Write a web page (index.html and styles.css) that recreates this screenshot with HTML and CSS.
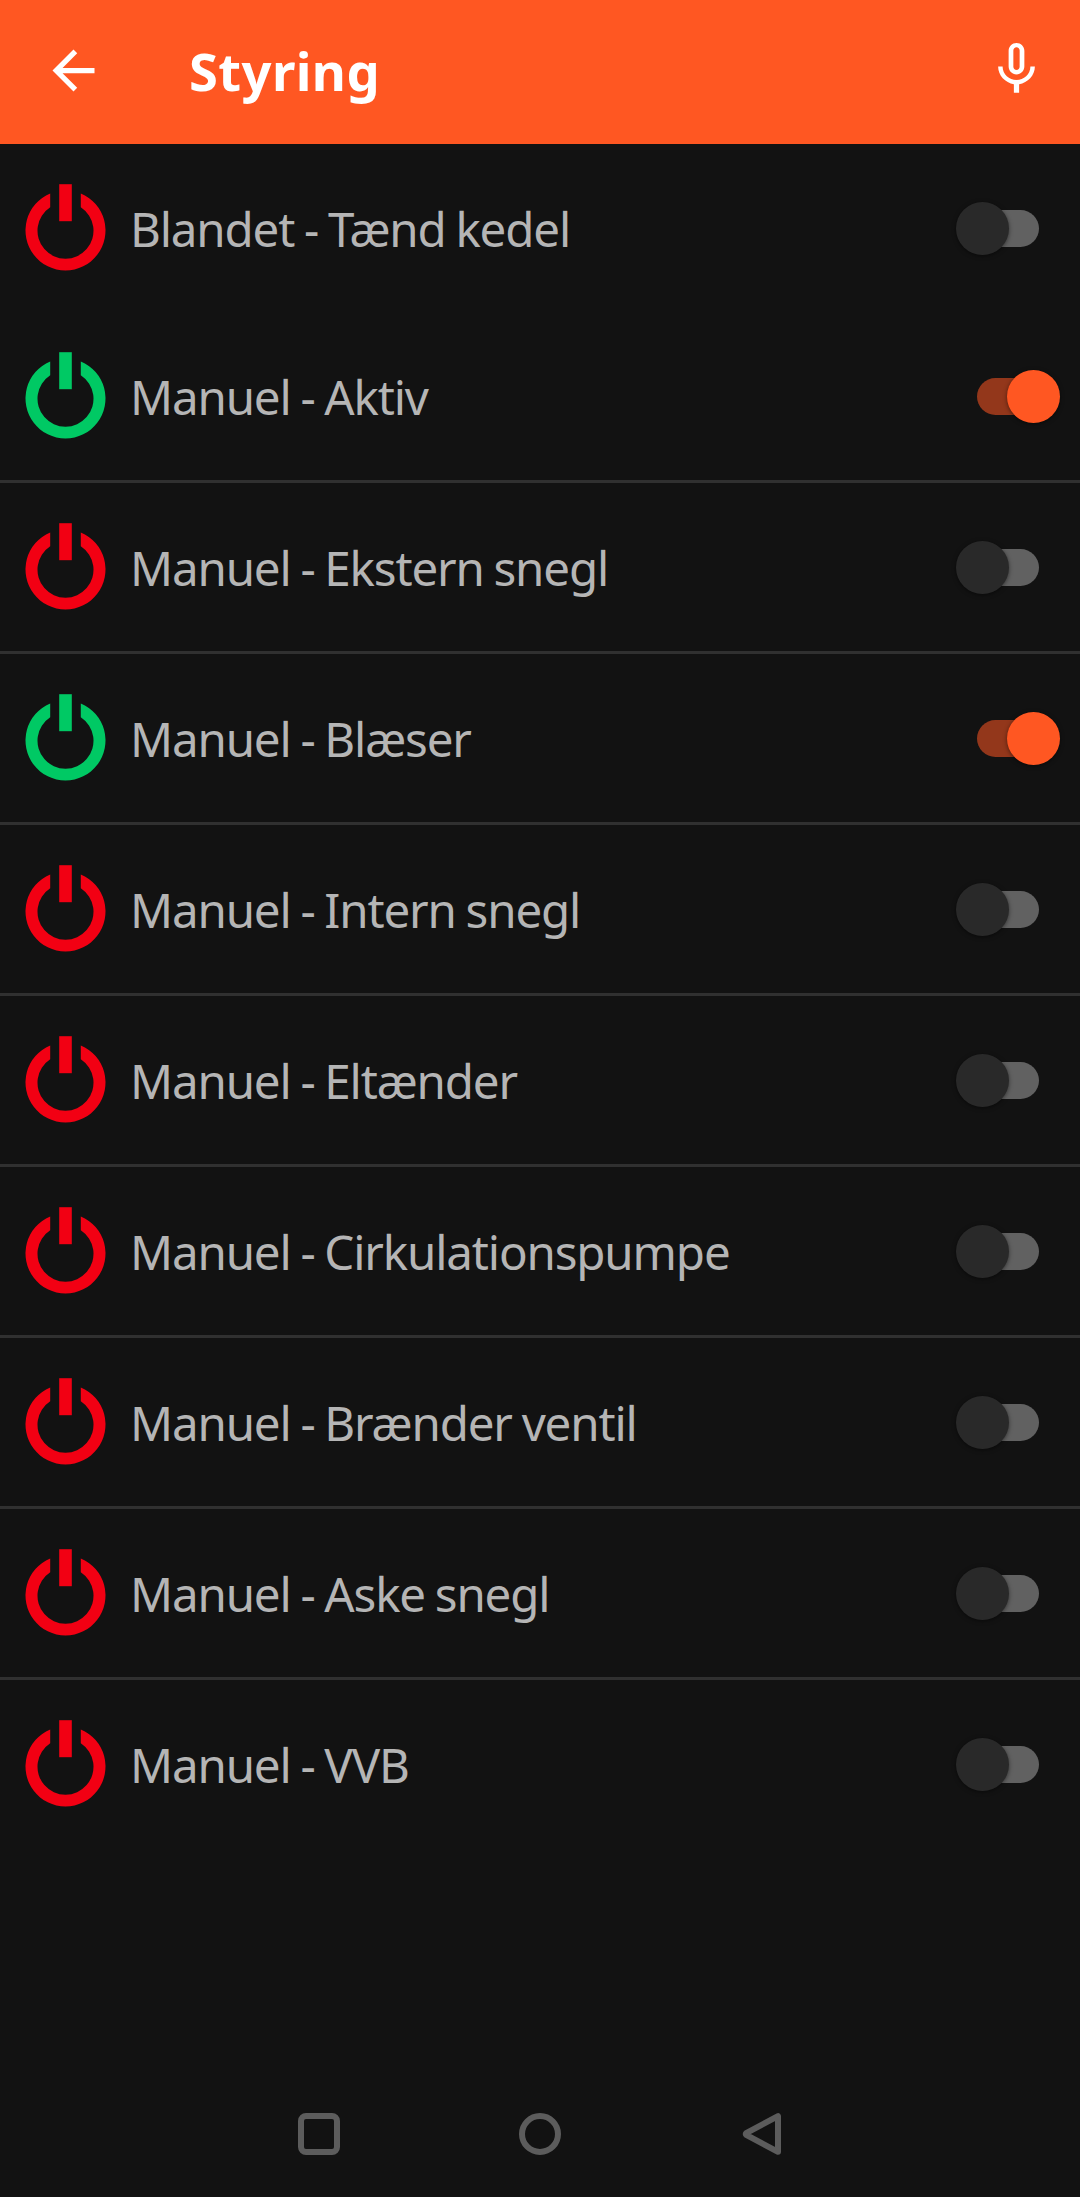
FILE: index.html
```
<!DOCTYPE html>
<html lang="da">
<head>
  <meta charset="UTF-8" />
  <meta name="viewport" content="width=device-width, initial-scale=1.0"/>
  <title>Styring</title>
  <link rel="stylesheet" href="styles.css">
</head>
<body>
  <svg class="defs" aria-hidden="true">
    <symbol id="power" viewBox="0 0 82 88">
      <path d="M25.2 9.5A40 40 0 1 0 55.8 9.5V23.2A28 28 0 1 1 25.2 23.2Z" />
      <rect x="34.2" y="0.2" width="12.6" height="37" />
    </symbol>
  </svg>

  <header class="topbar">
    <button class="icon-btn" aria-label="Tilbage">
      <svg viewBox="0 0 24 24"><path d="M20 11H7.83l5.59-5.59L12 4l-8 8 8 8 1.41-1.41L7.83 13H20v-2z"/></svg>
    </button>
    <h1>Styring</h1>
    <button class="icon-btn mic" aria-label="Tale">
      <svg viewBox="0 0 24 24"><path d="M12 15c1.66 0 2.99-1.34 2.99-3L15 6c0-1.66-1.34-3-3-3S9 4.34 9 6v6c0 1.66 1.34 3 3 3zm-1.2-9.1c0-.66.54-1.2 1.2-1.2s1.2.54 1.2 1.2l-.01 6.2c0 .66-.53 1.2-1.19 1.2s-1.2-.54-1.2-1.2V5.9zm6.5 6.1c0 3-2.54 5.1-5.3 5.1S6.7 15 6.7 12H5c0 3.41 2.72 6.23 6 6.72V22h2v-3.28c3.28-.48 6-3.3 6-6.72h-1.7z"/></svg>
    </button>
  </header>

  <ul class="list">
    <li class="row plain"><svg class="power"><use href="#power"/></svg><span class="label">Blandet - Tænd kedel</span><button class="switch"></button></li>
    <li class="row on"><svg class="power"><use href="#power"/></svg><span class="label">Manuel - Aktiv</span><button class="switch"></button></li>
    <li class="row"><svg class="power"><use href="#power"/></svg><span class="label">Manuel - Ekstern snegl</span><button class="switch"></button></li>
    <li class="row on"><svg class="power"><use href="#power"/></svg><span class="label">Manuel - Blæser</span><button class="switch"></button></li>
    <li class="row"><svg class="power"><use href="#power"/></svg><span class="label">Manuel - Intern snegl</span><button class="switch"></button></li>
    <li class="row"><svg class="power"><use href="#power"/></svg><span class="label">Manuel - Eltænder</span><button class="switch"></button></li>
    <li class="row"><svg class="power"><use href="#power"/></svg><span class="label">Manuel - Cirkulationspumpe</span><button class="switch"></button></li>
    <li class="row"><svg class="power"><use href="#power"/></svg><span class="label">Manuel - Brænder ventil</span><button class="switch"></button></li>
    <li class="row"><svg class="power"><use href="#power"/></svg><span class="label">Manuel - Aske snegl</span><button class="switch"></button></li>
    <li class="row plain"><svg class="power"><use href="#power"/></svg><span class="label">Manuel - VVB</span><button class="switch"></button></li>
  </ul>

  <nav class="navbar">
    <svg viewBox="0 0 42 42"><rect x="3" y="3" width="36" height="36" rx="5"/></svg>
    <svg viewBox="0 0 42 42"><circle cx="21" cy="21" r="18"/></svg>
    <svg viewBox="0 0 42 42"><path d="M38 3.2V38.8L6.6 22.2Q4.8 21 6.6 19.8Z"/></svg>
  </nav>

  <script>
    document.querySelectorAll('.switch').forEach(sw => {
      sw.addEventListener('click', () => sw.parentElement.classList.toggle('on'));
    });
  </script>
</body>
</html>
```
FILE: styles.css
```
:root {
  --accent: #ff5722;
  --bg: #121212;
  --text: #b5b5b5;
  --divider: #303030;
  --red: #f20013;
  --green: #00c964;
}

* {
  box-sizing: border-box;
}

body {
  margin: 0;
  min-height: 100vh;
  display: flex;
  flex-direction: column;
  background: var(--bg);
  color: var(--text);
  font-family: "Noto Sans", "Open Sans", sans-serif;
}

button {
  padding: 0;
  border: none;
  background: none;
  cursor: pointer;
}

.defs {
  display: none;
}

.topbar {
  height: 144px;
  padding: 0 32px 3px 42px;
  display: flex;
  align-items: center;
  background: var(--accent);
  color: white;
}

.topbar h1 {
  flex: 1;
  margin: 0 0 0 84px;
  font-size: 52.5px;
  line-height: 72px;
  font-weight: bold;
  letter-spacing: 0.4px;
}

.icon-btn {
  width: 63px;
  height: 63px;
}

.icon-btn svg {
  display: block;
  width: 63px;
  height: 63px;
  fill: white;
}

.icon-btn.mic {
  margin-bottom: 8px;
}

.list {
  flex: 1;
  margin: 0;
  padding: 0;
  list-style: none;
}

.row {
  height: 171px;
  padding: 0 20px 0 25px;
  display: flex;
  align-items: center;
  border-bottom: 3px solid var(--divider);
}

.row.plain {
  height: 168px;
  border-bottom: none;
}

.power {
  width: 82px;
  height: 88px;
  fill: var(--red);
}

.row.on .power {
  fill: var(--green);
}

.label {
  flex: 1;
  margin-left: 23px;
  padding-top: 2px;
  font-size: 47.5px;
  line-height: 66px;
  letter-spacing: -1.15px;
  word-spacing: -1.4px;
}

.switch {
  width: 83px;
  height: 53px;
  margin-right: 21px;
  display: flex;
  align-items: center;
}

.switch::before {
  content: "";
  width: 53px;
  height: 53px;
  border-radius: 50%;
  background: #292929;
  box-shadow: 0 1px 4px rgba(0, 0, 0, 0.5);
  z-index: 1;
}

.switch::after {
  content: "";
  width: 60px;
  height: 37px;
  margin-left: -30px;
  border-radius: 19px;
  background: #616161;
}

.row.on .switch {
  flex-direction: row-reverse;
  margin-right: 0;
}

.row.on .switch::before {
  background: var(--accent);
}

.row.on .switch::after {
  margin: 0 -30px 0 0;
  background: #93371b;
}

.navbar {
  height: 126px;
  padding: 0 298px;
  display: flex;
  justify-content: space-between;
  align-items: center;
}

.navbar svg {
  width: 42px;
  height: 42px;
  fill: none;
  stroke: #5c5c5c;
  stroke-width: 6;
  stroke-linejoin: round;
}
```
